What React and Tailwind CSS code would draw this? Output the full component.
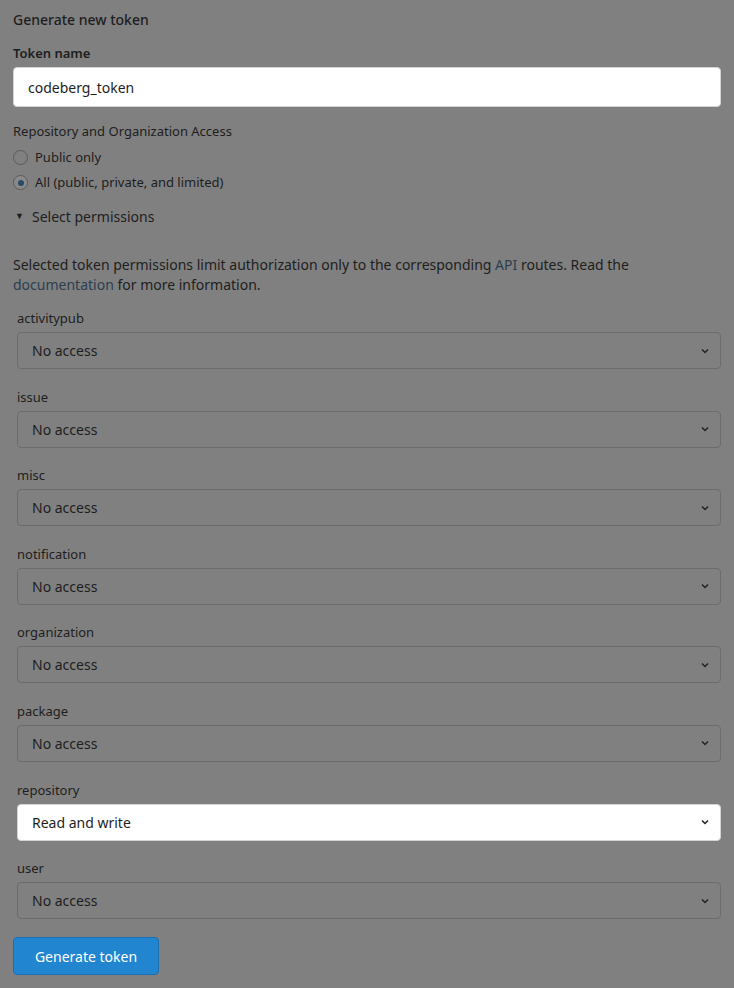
import React from "react";

const scopes = [
  { name: "activitypub", value: "No access" },
  { name: "issue", value: "No access" },
  { name: "misc", value: "No access" },
  { name: "notification", value: "No access" },
  { name: "organization", value: "No access" },
  { name: "package", value: "No access" },
  { name: "repository", value: "Read and write", active: true },
  { name: "user", value: "No access" },
];

const Chevron = () => (
  <svg width="10" height="10" viewBox="0 0 10 10" className="text-[#222]">
    <path d="M2 3.5 L5 6.5 L8 3.5" fill="none" stroke="currentColor" strokeWidth="1.5" />
  </svg>
);

export default function App() {
  return (
    <div
      className="w-[734px] h-[988px] bg-[#808080] text-[#1e1e1e] overflow-hidden"
      style={{ fontFamily: '"Noto Sans", "Open Sans", sans-serif' }}
    >
      <div className="pl-[13px] pr-[13px] pt-[10px]">
        {/* ===== 헤더 ===== */}
        <h2 className="text-[14px] leading-[20px] font-medium">Generate new token</h2>

        <div className="mt-[13px] text-[13px] leading-[20px] font-semibold">Token name</div>
        <div className="mt-[4px] h-[40px] bg-white rounded-[4px] border border-[#d4d4d4] flex items-center pl-[14px] text-[14px]">
          codeberg_token
        </div>

        {/* ===== 접근 범위 ===== */}
        <div className="mt-[14px] text-[13px] leading-[20px]">Repository and Organization Access</div>
        <div className="mt-[4px] flex items-center gap-[7px] h-[25px] text-[13px]">
          <span className="w-[15px] h-[15px] rounded-full border border-[#5a5a5a] bg-[#808080]" />
          <span>Public only</span>
        </div>
        <div className="flex items-center gap-[7px] h-[25px] text-[13px]">
          <span className="w-[15px] h-[15px] rounded-full border border-[#5a5a5a] bg-[#8a8a8a] flex items-center justify-center">
            <span className="w-[6px] h-[6px] rounded-full bg-[#2a4a6a]" />
          </span>
          <span>All (public, private, and limited)</span>
        </div>

        <div className="mt-[11px] flex items-center h-[20px] text-[14px]">
          <span className="text-[9px] w-[19px] pl-[2px]">▼</span>
          <span>Select permissions</span>
        </div>

        <p className="mt-[29px] text-[14px] leading-[20px]">
          Selected token permissions limit authorization only to the corresponding{" "}
          <span className="text-[#2c3e50]">API</span> routes. Read the{" "}
          <span className="text-[#2c3e50]">documentation</span> for more information.
        </p>

        {/* ===== 권한 선택 ===== */}
        <div className="mt-[14px] pl-[4px] flex flex-col gap-[18.6px]">
          {scopes.map(s => (
            <div key={s.name}>
              <div className="text-[13px] leading-[18px]">{s.name}</div>
              <div
                className={`mt-[5px] h-[37px] rounded-[4px] border flex items-center justify-between pl-[14px] pr-[10px] text-[14px] ${
                  s.active ? "bg-white border-[#d4d4d4]" : "border-[#6c6c6c]"
                }`}
              >
                <span>{s.value}</span>
                <Chevron />
              </div>
            </div>
          ))}
        </div>

        <button className="mt-[18px] w-[146px] h-[38px] rounded-[4px] bg-[#2185d0] border border-[#1a70b0] text-white text-[14px]">
          Generate token
        </button>
      </div>
    </div>
  );
}
